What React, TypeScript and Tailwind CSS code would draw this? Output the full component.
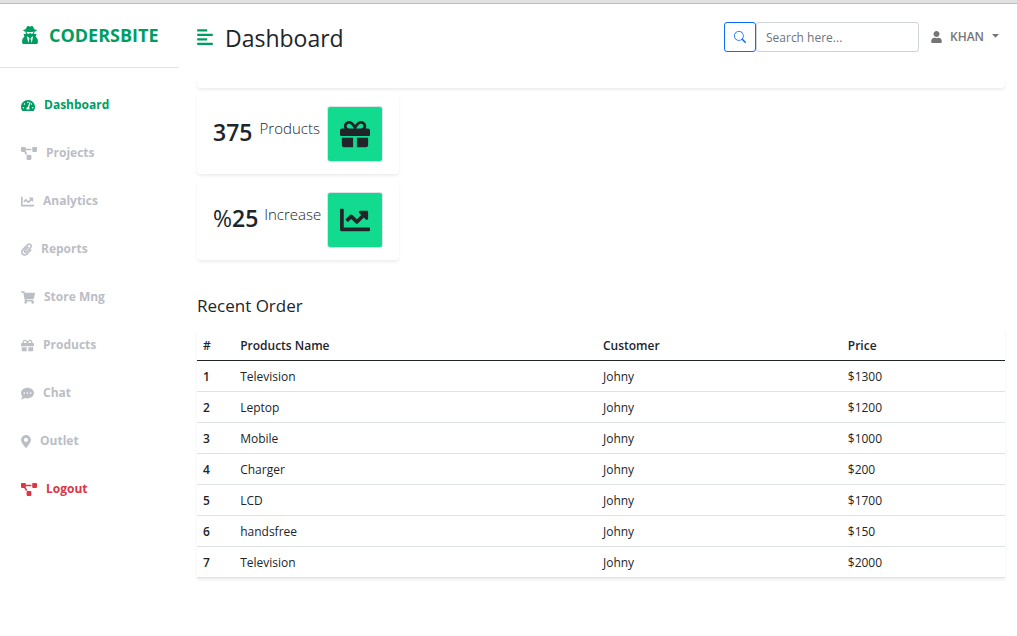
import React from "react";
import type { IconType } from "react-icons";
import {
  FaAlignLeft,
  FaChartLine,
  FaCommentDots,
  FaGift,
  FaMapMarkerAlt,
  FaPaperclip,
  FaProjectDiagram,
  FaShoppingCart,
  FaTachometerAlt,
  FaUser,
  FaUserSecret,
} from "react-icons/fa";
import { BsSearch } from "react-icons/bs";

type NavItem = { label: string; icon: IconType; iconClass: string; color: string };

const muted = "text-[#bbbec5]";

const navItems: NavItem[] = [
  { label: "Dashboard", icon: FaTachometerAlt, iconClass: "w-[14px]", color: "text-[#009d63]" },
  { label: "Projects", icon: FaProjectDiagram, iconClass: "w-4", color: muted },
  { label: "Analytics", icon: FaChartLine, iconClass: "w-[13px]", color: muted },
  { label: "Reports", icon: FaPaperclip, iconClass: "w-[11px]", color: muted },
  { label: "Store Mng", icon: FaShoppingCart, iconClass: "w-[14px]", color: muted },
  { label: "Products", icon: FaGift, iconClass: "w-[13px]", color: muted },
  { label: "Chat", icon: FaCommentDots, iconClass: "w-[13px]", color: muted },
  { label: "Outlet", icon: FaMapMarkerAlt, iconClass: "w-[10px]", color: muted },
  { label: "Logout", icon: FaProjectDiagram, iconClass: "w-4", color: "text-[#dc3545]" },
];

const orders = [
  { product: "Television", customer: "Johny", price: "$1300" },
  { product: "Leptop", customer: "Johny", price: "$1200" },
  { product: "Mobile", customer: "Johny", price: "$1000" },
  { product: "Charger", customer: "Johny", price: "$200" },
  { product: "LCD", customer: "Johny", price: "$1700" },
  { product: "handsfree", customer: "Johny", price: "$150" },
  { product: "Television", customer: "Johny", price: "$2000" },
];

function Sidebar() {
  return (
    <aside className="w-[179px] shrink-0">
      <a
        href="#"
        className="flex h-16 items-center gap-[11px] border-b border-[#dee2e6] pb-[2px] pl-[22px] text-lg font-bold text-[#009d63]"
      >
        <FaUserSecret className="h-[18px] w-4" />
        CODERSBITE
      </a>
      <nav className="flex flex-col pt-[13px]">
        {navItems.map(({ label, icon: Icon, iconClass, color }) => (
          <a
            key={label}
            href="#"
            className={`flex h-12 items-center gap-[9px] pl-[21px] text-xs font-bold ${color}`}
          >
            <Icon className={`h-[13px] shrink-0 ${iconClass}`} />
            {label}
          </a>
        ))}
      </nav>
    </aside>
  );
}

function TopBar() {
  return (
    <header className="flex h-[74px] items-start justify-between pt-[17px]">
      <div className="flex h-[34px] items-center gap-3">
        <button type="button" aria-label="Toggle menu" className="pb-[2px] text-[#009d63]">
          <FaAlignLeft className="h-[18px] w-4" />
        </button>
        <h1 className="text-[23px] leading-8 font-medium">Dashboard</h1>
      </div>
      <div className="flex h-8 items-center">
        <form className="flex" onSubmit={(event) => event.preventDefault()}>
          <button
            type="submit"
            aria-label="Search"
            className="flex h-[30px] w-8 items-center justify-center rounded-[3px] border border-[#0d6efd] text-[#0d6efd]"
          >
            <BsSearch className="size-3" />
          </button>
          <input
            type="search"
            aria-label="Search"
            placeholder="Search here..."
            className="h-[30px] w-[163px] rounded-[3px] border border-[#ced4da] px-[9px] text-xs placeholder:text-[#6c757d]"
          />
        </form>
        <button
          type="button"
          className="ml-3 flex items-center gap-2 pr-[6px] text-xs font-semibold text-[#757575]"
        >
          <FaUser className="h-3 w-[11px]" />
          KHAN
          <svg viewBox="0 0 7 4" className="h-1 w-[7px] -translate-y-px fill-current" aria-hidden="true">
            <path d="M0 0h7L3.500 3.700z" />
          </svg>
        </button>
      </div>
    </header>
  );
}

function StatCard({ value, label, icon: Icon }: { value: React.ReactNode; label: string; icon: IconType }) {
  return (
    <section className="flex h-20 w-[202px] items-center justify-between rounded-sm px-4 shadow-[0_2px_3px_rgba(0,0,0,0.07)]">
      <h2 className="pb-1 text-[23px] leading-8 font-semibold">{value}</h2>
      <p className="pb-3 text-[15px] leading-5 font-light">{label}</p>
      <div className="flex size-14 items-center justify-center rounded-[3px] border border-[#dee2e6] bg-[#12db90]">
        <Icon className="size-[30px]" />
      </div>
    </section>
  );
}

function OrdersTable() {
  return (
    <table className="w-full table-fixed border-collapse text-left text-xs shadow-[0_2px_3px_rgba(0,0,0,0.07)]">
      <colgroup>
        <col className="w-[4.6%]" />
        <col className="w-[44.9%]" />
        <col className="w-[30.3%]" />
        <col className="w-[20.2%]" />
      </colgroup>
      <thead>
        <tr className="h-[31px] border-b border-[#212529]">
          {["#", "Products Name", "Customer", "Price"].map((heading) => (
            <th key={heading} scope="col" className="px-[6px] pt-1 font-semibold">
              {heading}
            </th>
          ))}
        </tr>
      </thead>
      <tbody>
        {orders.map((order, index) => (
          <tr key={index} className="h-[31px] border-b border-[#dee2e6]">
            <th scope="row" className="px-[6px] pt-[2px] font-semibold">
              {index + 1}
            </th>
            <td className="px-[6px] pt-[2px]">{order.product}</td>
            <td className="px-[6px] pt-[2px]">{order.customer}</td>
            <td className="px-[6px] pt-[2px]">{order.price}</td>
          </tr>
        ))}
      </tbody>
    </table>
  );
}

export default function App() {
  return (
    <div className="min-h-screen border-t-[3px] border-[#e1e1e1] bg-white font-['Open_Sans','Noto_Sans',sans-serif] text-[#212529]">
      <div className="flex border-t border-[#bdbdbd]">
        <Sidebar />
        <main className="min-w-0 grow pr-3 pl-[18px]">
          <TopBar />
          <div className="h-[10px] rounded-b-sm shadow-[0_2px_3px_rgba(0,0,0,0.07)]" />
          <div className="flex flex-col gap-[6px] pt-[6px]">
            <StatCard value="375" label="Products" icon={FaGift} />
            <StatCard
              value={
                <>
                  <span className="font-normal">%</span>25
                </>
              }
              label="Increase"
              icon={FaChartLine}
            />
          </div>
          <h2 className="mt-8 mb-[9px] text-[17px] leading-7 font-medium">Recent Order</h2>
          <OrdersTable />
        </main>
      </div>
    </div>
  );
}
